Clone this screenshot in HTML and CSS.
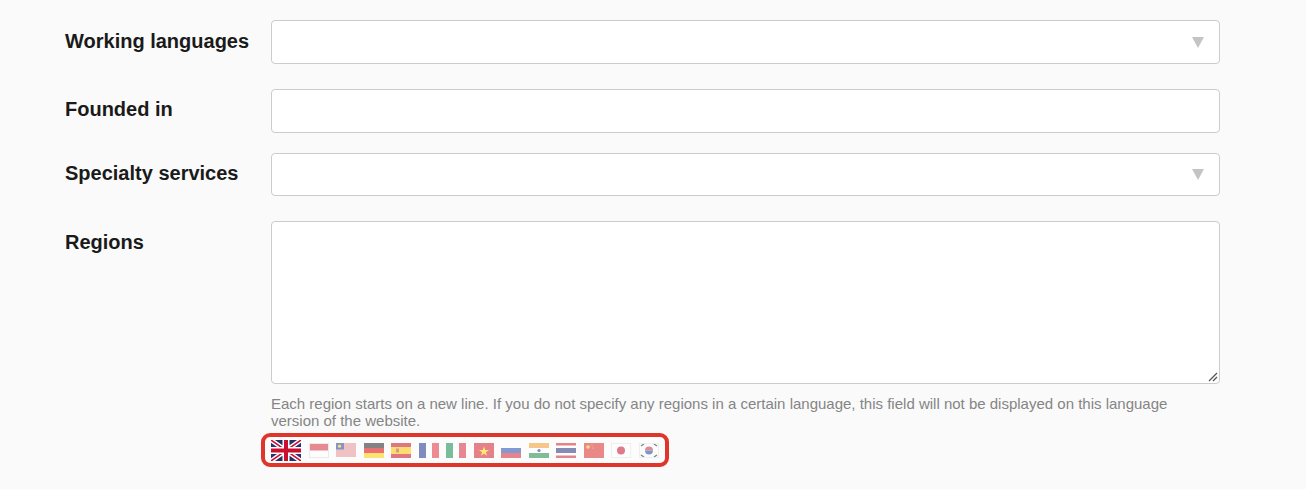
FILE: index.html
```html
<!DOCTYPE html>
<html lang="en">
<head>
<meta charset="utf-8">
<title>Company profile</title>
<link rel="stylesheet" href="styles.css">
</head>
<body>
<form class="form">
  <div class="row row-a">
    <label class="label">Working languages</label>
    <div class="field select"><span class="arrow"></span></div>
  </div>
  <div class="row row-b">
    <label class="label">Founded in</label>
    <div class="field"></div>
  </div>
  <div class="row row-c">
    <label class="label">Specialty services</label>
    <div class="field select short"><span class="arrow"></span></div>
  </div>
  <div class="row row-d">
    <label class="label">Regions</label>
    <div class="control">
      <div class="area">
        <svg class="grip" width="10" height="10" viewBox="0 0 10 10"><path d="M1 9 9 1M5 9 9 5" stroke="#555" stroke-width="1.3" fill="none"/></svg>
      </div>
      <p class="help">Each region starts on a new line. If you do not specify any regions in a certain language, this field will not be displayed on this language version of the website.</p>
      <div class="flags">
        <svg class="flag uk" viewBox="0 0 30 21"><rect width="30" height="21" fill="#2b2f6b"/><path d="M0 0 30 21M30 0 0 21" stroke="#fff" stroke-width="4.5"/><path d="M0 0 30 21M30 0 0 21" stroke="#c8102e" stroke-width="1.5"/><path d="M15 0V21M0 10.500H30" stroke="#fff" stroke-width="7"/><path d="M15 0V21M0 10.500H30" stroke="#c8102e" stroke-width="4"/></svg>
        <svg class="flag" viewBox="0 0 20 15"><rect width="20" height="15" fill="#fff"/><rect width="20" height="7.500" fill="#d9303a"/><rect x=".5" y=".5" width="19" height="14" fill="none" stroke="#ddd"/></svg>
        <svg class="flag" viewBox="0 0 20 15"><rect width="20" height="15" fill="#fff"/><path d="M0 1H20M0 3H20M0 5H20M0 7H20M0 9H20M0 11H20M0 13H20" stroke="#cc2b35" stroke-width="1"/><rect width="8" height="6.500" fill="#2a3f8f"/><circle cx="3.500" cy="3.200" r="1.600" fill="#f2c531"/></svg>
        <svg class="flag" viewBox="0 0 20 15"><rect width="20" height="5" fill="#222"/><rect y="5" width="20" height="5" fill="#d00"/><rect y="10" width="20" height="5" fill="#fc0"/></svg>
        <svg class="flag" viewBox="0 0 20 15"><rect width="20" height="15" fill="#c60b1e"/><rect y="4" width="20" height="7" fill="#ffc400"/><rect x="5" y="5.500" width="3" height="4" fill="#b5541c"/></svg>
        <svg class="flag" viewBox="0 0 20 15"><rect width="7" height="15" fill="#1c2f8f"/><rect x="7" width="6" height="15" fill="#fff"/><rect x="13" width="7" height="15" fill="#e0323c"/></svg>
        <svg class="flag" viewBox="0 0 20 15"><rect width="7" height="15" fill="#128a4a"/><rect x="7" width="6" height="15" fill="#fff"/><rect x="13" width="7" height="15" fill="#d8293a"/></svg>
        <svg class="flag" viewBox="0 0 20 15"><rect width="20" height="15" fill="#d4202c"/><path d="M10 3.500 11.200 7.100H15L11.900 9.300 13 12.800 10 10.600 7 12.800 8.100 9.300 5 7.100H8.800Z" fill="#ffdd00"/></svg>
        <svg class="flag" viewBox="0 0 20 15"><rect width="20" height="5" fill="#fff"/><rect y="5" width="20" height="5" fill="#1f49b0"/><rect y="10" width="20" height="5" fill="#d5232f"/></svg>
        <svg class="flag" viewBox="0 0 20 15"><rect width="20" height="5" fill="#f39a2d"/><rect y="5" width="20" height="5" fill="#fff"/><rect y="10" width="20" height="5" fill="#1c8a45"/><circle cx="10" cy="7.500" r="1.600" fill="#1b2a80"/></svg>
        <svg class="flag" viewBox="0 0 20 15"><rect width="20" height="15" fill="#d3202e"/><rect y="2.500" width="20" height="10" fill="#fff"/><rect y="5" width="20" height="5" fill="#26307a"/></svg>
        <svg class="flag" viewBox="0 0 20 15"><rect width="20" height="15" fill="#dc2a2a"/><circle cx="4" cy="4" r="1.800" fill="#f6c62d"/><circle cx="8" cy="2" r=".6" fill="#f6c62d"/><circle cx="9" cy="5" r=".6" fill="#f6c62d"/></svg>
        <svg class="flag" viewBox="0 0 20 15"><rect width="20" height="15" fill="#fff"/><circle cx="10" cy="7.500" r="4" fill="#c8102e"/><rect x=".5" y=".5" width="19" height="14" fill="none" stroke="#e5e5e5"/></svg>
        <svg class="flag" viewBox="0 0 20 15"><rect width="20" height="15" fill="#fff"/><path d="M6 7.500a4 4 0 0 1 8 0z" fill="#cd2e3a"/><path d="M6 7.500a4 4 0 0 0 8 0z" fill="#0f4a9c"/><path d="M2 3 5 1M2 12l3 2M15 1l3 2M15 14l3-2" stroke="#222" stroke-width="1.500"/><rect x=".5" y=".5" width="19" height="14" fill="none" stroke="#e5e5e5"/></svg>
      </div>
    </div>
  </div>
</form>
</body>
</html>
```
FILE: styles.css
```css
* { box-sizing: border-box; }
html, body { margin: 0; background: #fafafa; }
body {
  height: 489px;
  overflow: hidden;
  font-family: "Liberation Sans", Arial, sans-serif;
  color: #1a1a1a;
}
.form { padding: 20px 86px 0 65px; }
.row {
  display: grid;
  grid-template-columns: 206px 949px;
}
.row-a, .row-c { margin-bottom: 25px; }
.row-b { margin-bottom: 20px; }
.label {
  font-size: 20px;
  font-weight: 700;
  line-height: 24px;
  padding-top: 9px;
}
.row-b .label { padding-top: 8px; }
.row-c .label { padding-top: 8px; }
.row-d .label { padding-top: 9px; }
.field, .area {
  background: #fff;
  border: 1px solid #ccc;
  border-radius: 4px;
}
.field { height: 44px; }
.field.short { height: 43px; }
.select {
  display: flex;
  align-items: center;
  justify-content: flex-end;
  padding-right: 15px;
}
.arrow {
  width: 0;
  height: 0;
  border-left: 6px solid transparent;
  border-right: 6px solid transparent;
  border-top: 11px solid #c4c4c4;
}
.area {
  height: 163px;
  display: flex;
  align-items: flex-end;
  justify-content: flex-end;
  padding: 0 1px 1px 0;
}
.grip { display: block; }
.help {
  margin: 11px 0 0;
  padding-right: 10px;
  font-size: 15px;
  line-height: 17px;
  color: #858585;
}
.flags {
  display: inline-flex;
  align-items: center;
  gap: 7.500px;
  margin: 4px 0 0 -10px;
  height: 34px;
  padding: 0 6px;
  border: 4px solid #e0352b;
  border-radius: 9px;
  background: #fcfcfc;
}
.flag {
  display: block;
  width: 20px;
  height: 15px;
  opacity: .55;
  flex: none;
}
.flag.uk {
  width: 30px;
  height: 21px;
  opacity: 1;
}
```
